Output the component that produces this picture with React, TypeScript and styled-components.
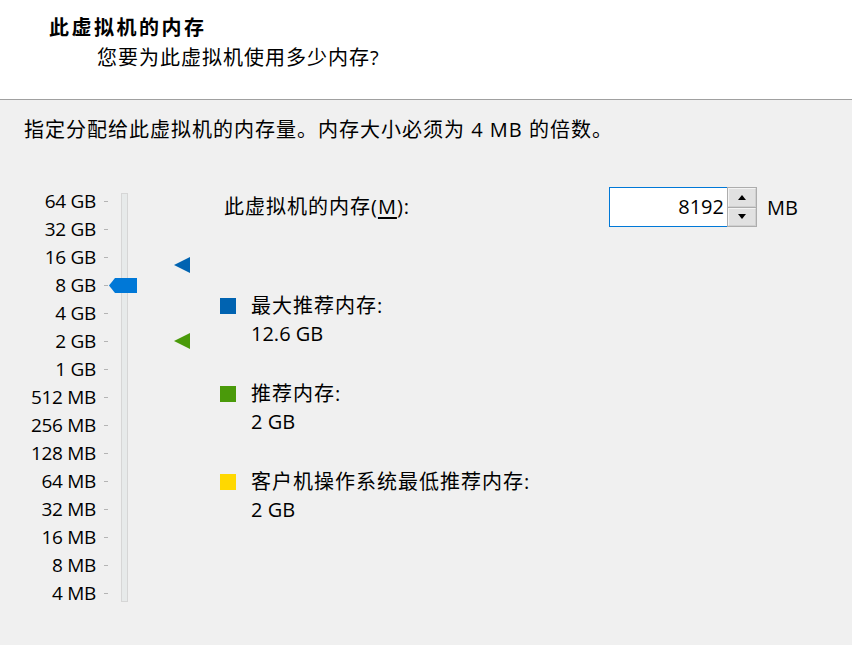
import React from "react";
import styled, { createGlobalStyle } from "styled-components";

const Global = createGlobalStyle`
  html, body { margin: 0; padding: 0; height: 100%; background: #f0f0f0; }
  #root { min-height: 100%; }
  body { font-family: "Open Sans", "Noto Sans CJK SC", sans-serif; color: #000; }
`;

const Page = styled.div`
  width: 852px;
  height: 645px;
  display: flex;
  flex-direction: column;
  background: #f0f0f0;
  overflow: hidden;
`;

const Header = styled.header`
  height: 100px;
  background: #fff;
  border-bottom: 1px solid #a0a0a0;
  padding: 14px 0 0 49px;
  box-sizing: border-box;
  display: flex;
  flex-direction: column;
`;

const Title = styled.h1`
  margin: 0;
  font-size: 20px;
  font-weight: 700;
  line-height: 28px;
  letter-spacing: 2.5px;
`;

const Subtitle = styled.div`
  margin: 2px 0 0 48px;
  font-size: 20px;
  line-height: 28px;
  letter-spacing: 1px;
`;

const Body = styled.main`
  flex: 1;
  padding: 16px 0 0 24px;
  display: flex;
  flex-direction: column;
`;

const Description = styled.p`
  margin: 0;
  font-size: 20px;
  line-height: 28px;
  letter-spacing: 1px;
`;

const Content = styled.div`
  display: flex;
  margin-top: 43px;
`;

const Scale = styled.div`
  display: flex;
  align-items: flex-start;
`;

const Labels = styled.div`
  width: 72px;
  display: flex;
  flex-direction: column;
  text-align: right;
`;

const Label = styled.div`
  height: 28px;
  line-height: 28px;
  font-size: 19px;
  letter-spacing: -0.3px;
  white-space: nowrap;
`;

const Ticks = styled.div`
  margin-left: 8px;
  display: flex;
  flex-direction: column;
`;

const Tick = styled.div`
  height: 28px;
  width: 4px;
  display: flex;
  align-items: center;
  &::before {
    content: "";
    display: block;
    width: 4px;
    height: 1px;
    background: #b4b4b4;
  }
`;

const TrackArea = styled.div`
  position: relative;
  width: 28px;
  height: 420px;
  margin-left: 1px;
`;

const Track = styled.div`
  position: absolute;
  left: 12px;
  top: 6px;
  width: 5px;
  height: 407px;
  background: #e7eaea;
  border: 1px solid #d6d6d6;
`;

const Thumb = styled.svg`
  position: absolute;
  left: 0;
  display: block;
`;

const MarkerArea = styled.div`
  position: relative;
  width: 16px;
  height: 420px;
  margin-left: 37px;
`;

const Marker = styled.svg`
  position: absolute;
  left: 0;
  display: block;
`;

const Side = styled.div`
  margin-left: 30px;
  display: flex;
  flex-direction: column;
`;

const MemoryRow = styled.div`
  display: grid;
  grid-template-columns: 385px auto auto;
  align-items: center;
  padding-left: 4px;
  height: 40px;
`;

const FieldLabel = styled.label`
  font-size: 20px;
  line-height: 28px;
  letter-spacing: 1px;
  u { text-decoration: underline; text-underline-offset: 3px; }
`;

const Spin = styled.div`
  display: flex;
  height: 40px;
`;

const SpinInput = styled.div`
  width: 114px;
  height: 38px;
  border: 1px solid #0078d7;
  border-right: none;
  background: #fff;
  font-size: 20px;
  line-height: 38px;
  text-align: right;
  padding-right: 3px;
  box-sizing: content-box;
`;

const SpinButtons = styled.div`
  width: 30px;
  display: flex;
  flex-direction: column;
  border: 1px solid #adadad;
  box-sizing: border-box;
  background: #adadad;
  gap: 1px;
`;

const SpinButton = styled.div`
  flex: 1;
  background: #e1e1e1;
  display: flex;
  align-items: center;
  justify-content: center;
  border: 1px solid #f4f4f4;
  border-right-color: #d0d0d0;
  border-bottom-color: #d0d0d0;
`;

const Unit = styled.span`
  margin-left: 10px;
  font-size: 20px;
`;

const Legend = styled.div`
  margin-top: 65px;
  display: flex;
  flex-direction: column;
  gap: 32px;
`;

const LegendItem = styled.div`
  display: grid;
  grid-template-columns: 16px auto;
  column-gap: 15px;
  align-items: center;
`;

const Swatch = styled.span<{ $color: string }>`
  width: 16px;
  height: 16px;
  background: ${(p) => p.$color};
`;

const LegendText = styled.div`
  font-size: 20px;
  line-height: 28px;
  letter-spacing: 1px;
`;

const LegendValue = styled.div`
  grid-column: 2;
  font-size: 20px;
  line-height: 28px;
`;

const labels = [
  "64 GB", "32 GB", "16 GB", "8 GB", "4 GB", "2 GB", "1 GB",
  "512 MB", "256 MB", "128 MB", "64 MB", "32 MB", "16 MB", "8 MB", "4 MB",
];

const posFor = (mb: number) => 14 + 28 * Math.log2(65536 / mb);

const BLUE = "#0063b1";
const GREEN = "#4a9a0a";
const YELLOW = "#ffd800";

export default function App() {
  const value = 8192;
  const thumbY = posFor(value) - 7.5;
  const maxY = posFor(12.6 * 1024) - 10;
  const recY = posFor(2048) - 8;
  return (
    <Page>
      <Global />
      <Header>
        <Title>此虚拟机的内存</Title>
        <Subtitle>您要为此虚拟机使用多少内存?</Subtitle>
      </Header>
      <Body>
        <Description>指定分配给此虚拟机的内存量。内存大小必须为 4 MB 的倍数。</Description>
        <Content>
          <Scale>
            <Labels>
              {labels.map((l) => (
                <Label key={l}>{l}</Label>
              ))}
            </Labels>
            <Ticks>
              {labels.map((l) => (
                <Tick key={l} />
              ))}
            </Ticks>
            <TrackArea>
              <Track />
              <Thumb width="28" height="15" viewBox="0 0 28 15" style={{ top: thumbY }}>
                <polygon points="0,7.5 6,0 28,0 28,15 6,15" fill="#0078d7" />
              </Thumb>
            </TrackArea>
            <MarkerArea>
              <Marker width="16" height="16" viewBox="0 0 16 16" style={{ top: maxY }}>
                <polygon points="0,8 16,0 16,16" fill={BLUE} />
              </Marker>
              <Marker width="16" height="16" viewBox="0 0 16 16" style={{ top: recY }}>
                <polygon points="0,8 16,0 16,16" fill={GREEN} />
              </Marker>
            </MarkerArea>
          </Scale>
          <Side>
            <MemoryRow>
              <FieldLabel>
                此虚拟机的内存(<u>M</u>):
              </FieldLabel>
              <Spin>
                <SpinInput>{value}</SpinInput>
                <SpinButtons>
                  <SpinButton>
                    <svg width="8" height="5" viewBox="0 0 8 5">
                      <polygon points="0,5 4,0 8,5" fill="#000" />
                    </svg>
                  </SpinButton>
                  <SpinButton>
                    <svg width="8" height="5" viewBox="0 0 8 5">
                      <polygon points="0,0 8,0 4,5" fill="#000" />
                    </svg>
                  </SpinButton>
                </SpinButtons>
              </Spin>
              <Unit>MB</Unit>
            </MemoryRow>
            <Legend>
              <LegendItem>
                <Swatch $color={BLUE} />
                <LegendText>最大推荐内存:</LegendText>
                <LegendValue>12.6 GB</LegendValue>
              </LegendItem>
              <LegendItem>
                <Swatch $color={GREEN} />
                <LegendText>推荐内存:</LegendText>
                <LegendValue>2 GB</LegendValue>
              </LegendItem>
              <LegendItem>
                <Swatch $color={YELLOW} />
                <LegendText>客户机操作系统最低推荐内存:</LegendText>
                <LegendValue>2 GB</LegendValue>
              </LegendItem>
            </Legend>
          </Side>
        </Content>
      </Body>
    </Page>
  );
}
